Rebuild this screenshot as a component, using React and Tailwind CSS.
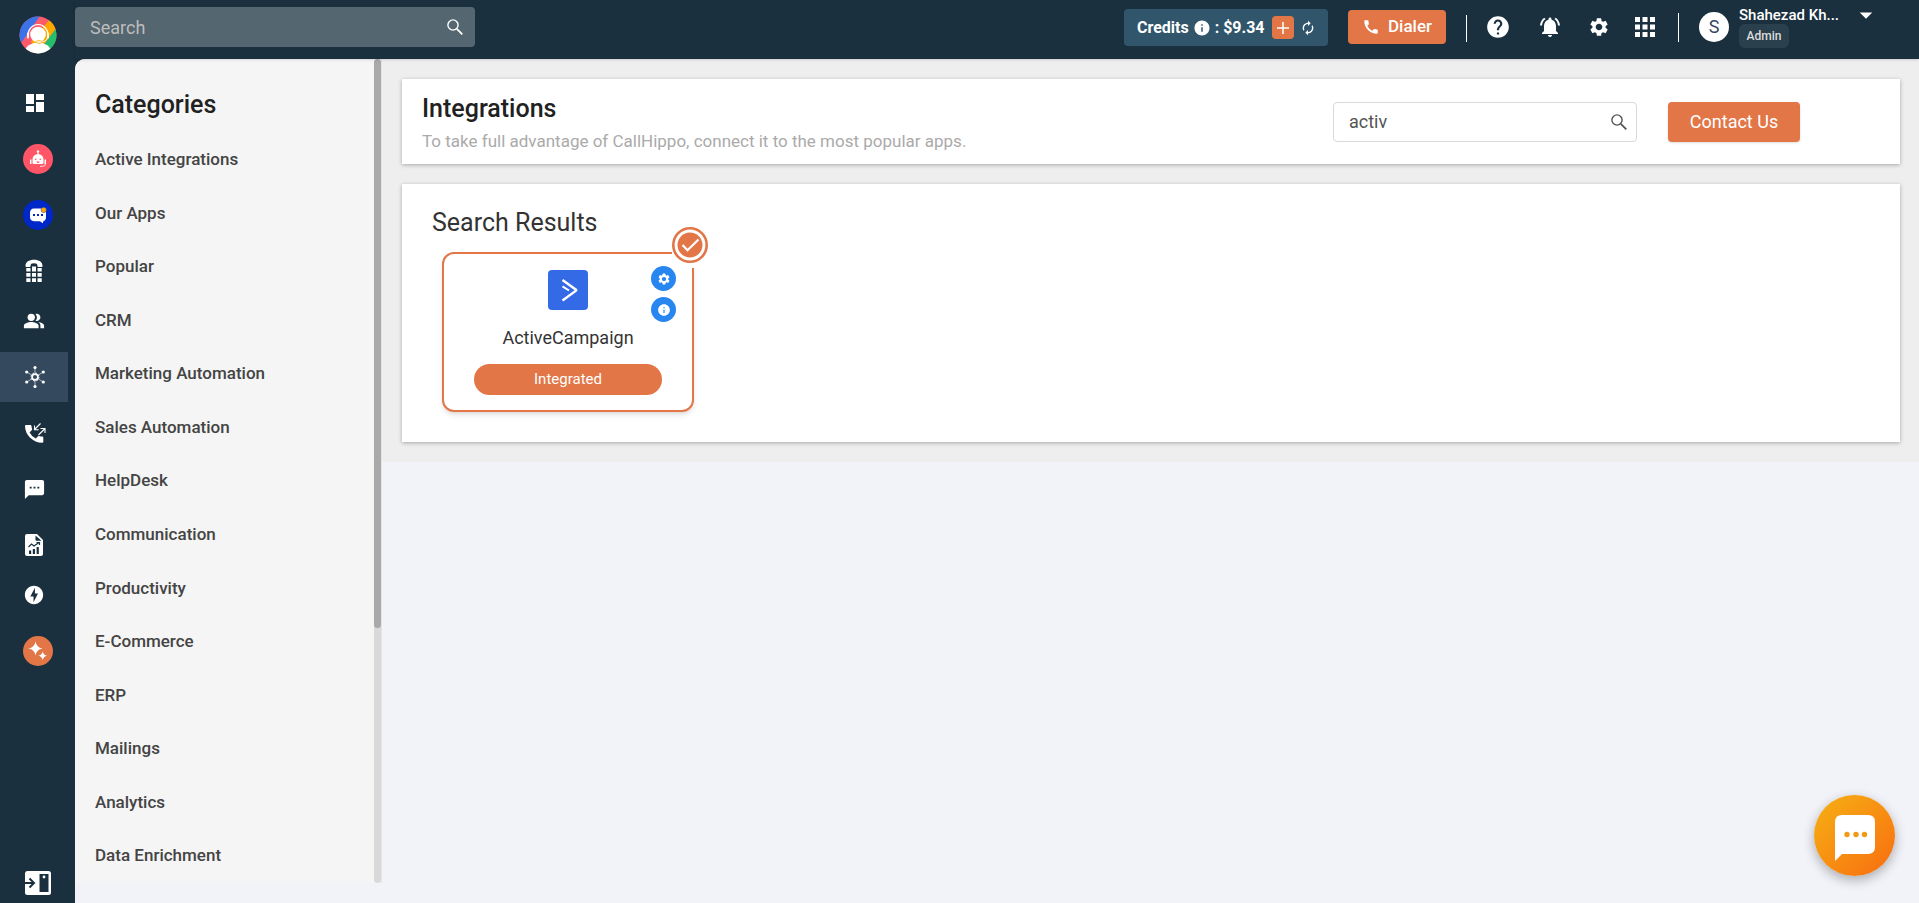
import { useState } from 'react';
import {
  MdApps,
  MdArrowDropDown,
  MdAutorenew,
  MdCall,
  MdDashboard,
  MdHelp,
  MdInfo,
  MdNotificationsActive,
  MdOfflineBolt,
  MdPeopleAlt,
  MdSettings,
  MdSms
} from 'react-icons/md';

const categories = [
  'Active Integrations',
  'Our Apps',
  'Popular',
  'CRM',
  'Marketing Automation',
  'Sales Automation',
  'HelpDesk',
  'Communication',
  'Productivity',
  'E-Commerce',
  'ERP',
  'Mailings',
  'Analytics',
  'Data Enrichment'
];

const SearchIcon = ({ className }) => (
  <svg viewBox="0 0 16 16" className={className} fill="none" stroke="currentColor">
    <circle cx="6" cy="6" r="5.1" strokeWidth="1.4" />
    <path d="M9.8 9.8 15.3 15.3" strokeWidth="1.8" />
  </svg>
);

const LogoIcon = () => (
  <svg viewBox="0 0 38 38" className="size-[38px]">
    <defs>
      <clipPath id="logo-clip"><circle cx="19" cy="19" r="18.5" /></clipPath>
    </defs>
    <g clipPath="url(#logo-clip)">
      <rect width="38" height="38" fill="#ff5a6a" />
      <path d="M0 0h21L2 27H0z" fill="#3b72e8" />
      <path d="M31 3 38 12 20 34 12 26z" fill="#ffa800" />
      <path d="M38 11v27H18z" fill="#23bf6c" />
      <path d="M9 19a10 10.5 0 0 1 20 0" fill="none" stroke="#fff" strokeWidth="1.2" />
      <path d="M9 17.500v4M29 17.500v4" stroke="#fff" strokeWidth="2" strokeLinecap="round" />
      <ellipse cx="19" cy="36" rx="13" ry="9.500" fill="#fff" />
      <circle cx="19" cy="18.500" r="7.800" fill="#fff" />
      <path d="M28.500 22c-1 3-3.500 4-7 4" fill="none" stroke="#fff" strokeWidth="1" />
      <ellipse cx="20" cy="26" rx="3.200" ry="1.300" fill="#fff" stroke="#ffa800" strokeWidth=".8" />
    </g>
  </svg>
);

const BotIcon = () => (
  <svg viewBox="0 0 30 30" className="size-[30px]">
    <circle cx="15" cy="15" r="15" fill="#ff5566" />
    <path d="M14.500 8h1v3h-1z" fill="#fff" />
    <circle cx="15" cy="7.500" r="1.200" fill="#fff" />
    <path d="M9.500 19v-3.500a5.500 5.500 0 0 1 11 0V19q0 1-1 1h-9q-1 0-1-1z" fill="#fff" />
    <path d="M7 15.500h1.500V20H7zM21.500 15.500H23V20h-1.500z" fill="#fff" />
    <path d="M22.300 20c0 2-1.500 2.300-5.300 2.400" fill="none" stroke="#fff" strokeWidth=".9" />
    <circle cx="12.800" cy="15.300" r=".8" fill="#ff5566" />
    <circle cx="17.200" cy="15.300" r=".8" fill="#ff5566" />
    <path d="M13.500 17.400h3q-.3 1.500-1.500 1.500t-1.500-1.500z" fill="#ff5566" />
  </svg>
);

const BotChatIcon = () => (
  <svg viewBox="0 0 30 30" className="size-[30px]">
    <circle cx="15" cy="15" r="15" fill="#0028c8" />
    <path d="M11 8.500h8q4 0 4 4.500v4q0 3.500-2.500 4l-.8 2.200-2.700-2H11q-4-.2-4-4.200v-4q0-4.500 4-4.500z" fill="#fff" />
    <circle cx="20.700" cy="10" r="2.700" fill="#ffa800" stroke="#0028c8" strokeWidth=".4" />
    <path d="M10 14h2v2h-2zM14 14h2v2h-2zM18 14h2v2h-2z" fill="#0028c8" />
  </svg>
);

const DialpadIcon = () => (
  <svg viewBox="0 0 24 24" className="size-6" fill="currentColor">
    <path d="M2.500 7C2.500 3 6 .8 11 .8S19.500 3 19.500 7c0 .7-.4 1-1 1h-3c-.7 0-1-.3-1-1 0-2-1-2.700-3.500-2.700S7.500 5 7.500 7c0 .7-.3 1-1 1h-3c-.6 0-1-.3-1-1z" />
    <path d="M3.300 9h4.200v3.600H3.300zM9 7.500h4v5.100H9zM14.500 9h4.200v3.600h-4.200zM3.300 14h4.200v3.700H3.300zM9 14h4v3.700H9zM14.500 14h4.200v3.700h-4.200zM3.300 19.200h4.200V23H3.300zM9 19.200h4V23H9zM14.500 19.200h4.200V23h-4.200z" />
  </svg>
);

const HubIcon = () => (
  <svg viewBox="0 0 24 24" className="size-6" fill="currentColor" stroke="currentColor">
    <path d="M12 2v6M12 16v6M4 7.200l5 3M20 7.200l-5 3M4 16.800l5-3M20 16.800l-5-3" strokeWidth=".6" />
    <circle cx="12" cy="12" r="2.900" fill="none" strokeWidth="1.700" />
    <circle cx="12" cy="12" r="4" fill="none" strokeWidth="1" strokeDasharray="1.600 1.540" />
    <g stroke="none">
      <circle cx="12" cy="2.500" r="1.600" />
      <circle cx="12" cy="21.500" r="1.600" />
      <circle cx="3.700" cy="7" r="1.600" />
      <circle cx="20.300" cy="7" r="1.600" />
      <circle cx="3.700" cy="17" r="1.600" />
      <circle cx="20.300" cy="17" r="1.600" />
    </g>
  </svg>
);

const CallLogIcon = () => (
  <svg viewBox="0 0 24 24" className="size-6" fill="currentColor">
    <path d="M3 4h4.500q.8 0 .9.800.2 1.700.7 3.200.2.600-.2 1.100l-2.300 2.300q2.200 4.200 6.200 6.100l2.200-2.300q.5-.4 1.100-.2 1.600.5 3.300.6.900.1.900.9v4.300q0 1-1 1C10 21.800 2 14 2 5q0-1 1-1z" />
    <path d="M17.500 2.500 12 8M11.500 4.500V8.700h4.200M15.500 14l6-6M17.500 7.500h4.500v4.500" fill="none" stroke="currentColor" strokeWidth="1.100" />
  </svg>
);

const ReportIcon = () => (
  <svg viewBox="0 0 24 24" className="size-6">
    <path d="M4 1h10l6 6v14q0 2-2 2H4q-2 0-2-2V3q0-2 2-2z" fill="#fff" />
    <path d="M12.500 2.500V7q0 .7.700.7h5.300z" fill="#1a303e" />
    <path d="M5.500 14l3-3 2.500 2 5-3.500M13.500 9.500h3v2.500" fill="none" stroke="#1a303e" strokeWidth="1.200" />
    <path d="M6 17.500h2.200V21H6zM9.800 16H12v5H9.800zM13.600 14h2.200v7h-2.200z" fill="#1a303e" />
  </svg>
);

const SparkleIcon = () => (
  <svg viewBox="0 0 30 30" className="size-[30px]">
    <circle cx="15" cy="15" r="15" fill="#e27647" />
    <path d="M12.500 5.500q1 6 7 7-6 1-7 7-1-6-7-7 6-1 7-7zM19.700 15.500q.7 3.500 4.300 4.200-3.600.7-4.300 4.300-.7-3.600-4.300-4.300 3.600-.7 4.300-4.200z" fill="#fff" />
  </svg>
);

const PanelIcon = () => (
  <svg viewBox="0 0 26 24" className="h-6 w-[26px]">
    <rect width="26" height="24" rx="2.500" fill="#fff" />
    <rect x="14.500" y="3" width="9" height="18" fill="#1a303e" />
    <path d="M0 12h8.500M4.500 7.500 9 12l-4.500 4.500" fill="none" stroke="#1a303e" strokeWidth="2" />
    <circle cx="19" cy="6" r="1.400" fill="#fff" />
  </svg>
);

const navGroups = [
  [
    { label: 'Dashboard', icon: <MdDashboard size={24} /> },
    { label: 'AI Voice Agent', icon: <BotIcon /> },
    { label: 'AI Chat', icon: <BotChatIcon /> },
    { label: 'Numbers', icon: <DialpadIcon /> }
  ],
  [
    { label: 'Users', icon: <MdPeopleAlt size={22} /> },
    { label: 'Integrations', icon: <HubIcon />, active: true },
    { label: 'Call Logs', icon: <CallLogIcon /> },
    { label: 'Messages', icon: <MdSms size={23} /> },
    { label: 'Reports', icon: <ReportIcon /> }
  ],
  [
    { label: 'Power Dialer', icon: <MdOfflineBolt size={22} /> },
    { label: 'AI Features', icon: <SparkleIcon /> }
  ]
];

const Sidebar = () => (
  <aside className="sticky top-0 h-screen w-[75px] shrink-0 flex flex-col bg-[#1a303e] text-white">
    <a href="#" aria-label="Home" className="self-center mt-4">
      <LogoIcon />
    </a>
    <nav className="mt-6">
      {navGroups.map((group, i) => (
        <div key={i} className="flex flex-col gap-1.5">
          {group.map(item => (
            <a
              key={item.label}
              href="#"
              aria-label={item.label}
              className={`flex items-center w-[68px] h-[50px] pl-[23px] ${item.active ? 'bg-[#34495e]' : ''}`}
            >
              {item.icon}
            </a>
          ))}
        </div>
      ))}
    </nav>
    <button type="button" aria-label="Expand menu" className="mt-auto mb-2 ml-[25px] self-start">
      <PanelIcon />
    </button>
  </aside>
);

const Header = () => (
  <header className="relative z-10 flex h-[59px] items-start bg-[#1a303e] text-white shadow">
    <label className="flex items-center w-[400px] h-10 mt-[7px] px-[15px] rounded bg-[#54666f]">
      <input
        type="text"
        aria-label="Search"
        placeholder="Search"
        className="flex-1 min-w-0 pt-0.5 bg-transparent text-lg placeholder-[#bdbdbd] focus:outline-none"
      />
      <SearchIcon className="size-4 mr-[-3px]" />
    </label>

    <div className="ml-auto flex items-start pr-[38px]">
      <div className="flex items-center w-[204px] h-[37px] mt-[9px] pl-[13px] rounded bg-[#31566c] text-base font-bold">
        <span>Credits</span>
        <MdInfo size={18} className="mx-1" />
        <span>: $9.34</span>
        <button type="button" aria-label="Add credits" className="ml-auto flex items-center justify-center w-[22px] h-[23px] rounded bg-[#e27647]">
          <svg viewBox="0 0 12 12" className="size-3" stroke="currentColor" strokeWidth="1.500">
            <path d="M6 0v12M0 6h12" />
          </svg>
        </button>
        <button type="button" aria-label="Refresh credits" className="ml-1.5 mr-3">
          <MdAutorenew size={16} />
        </button>
      </div>

      <button type="button" className="flex items-center justify-center gap-2 w-[98px] h-[34px] mt-2.5 ml-5 rounded bg-[#e27647] text-[17px] font-medium">
        <MdCall size={18} />
        Dialer
      </button>

      <div className="w-px h-[27px] mt-[15px] ml-5 bg-white" />

      <div className="flex items-center mt-3 ml-[18px]">
        <button type="button" aria-label="Help"><MdHelp size={26} /></button>
        <button type="button" aria-label="Notifications" className="ml-[27px]"><MdNotificationsActive size={24} /></button>
        <button type="button" aria-label="Settings" className="ml-[26px]"><MdSettings size={22} /></button>
        <button type="button" aria-label="Apps" className="ml-5"><MdApps size={30} /></button>
      </div>

      <div className="w-px h-[29px] mt-[13px] ml-[18px] bg-white" />

      <div className="flex items-center justify-center size-[30px] mt-3 ml-5 rounded-full bg-white text-[#34495e] text-lg">
        S
      </div>
      <div className="ml-2.5 mt-1.5 w-[110px]">
        <div className="text-[15px] leading-[18px] font-medium whitespace-nowrap">Shahezad Kh...</div>
        <div className="flex items-center justify-center w-[50px] h-6 rounded-md bg-[#2b404d] text-xs font-medium text-[#dddddd]">
          Admin
        </div>
      </div>
      <button type="button" aria-label="Account menu" className="ml-0.5">
        <MdArrowDropDown size={30} />
      </button>
    </div>
  </header>
);

const CategoryPanel = () => (
  <section className="sticky top-[59px] flex w-[307px] h-[calc(100vh-79px)] shrink-0 overflow-hidden rounded-tl-[10px] border-r border-[#e4e4e4] bg-[#f5f5f5]">
    <div className="flex-1 px-5 pt-7">
      <h2 className="text-[25px] leading-9 font-medium text-[#212121]">Categories</h2>
      <ul className="mt-2.5 grid auto-rows-fr h-[750px]">
        {categories.map(name => (
          <li key={name} className="flex items-center text-[17px] font-medium text-[#444444] whitespace-nowrap">
            <a href="#">{name}</a>
          </li>
        ))}
      </ul>
    </div>
    <div className="w-[7px] rounded bg-[#d9d9d9]">
      <div className="h-[69%] rounded bg-[#a9a9a9]" />
    </div>
  </section>
);

const IntegrationCard = () => (
  <article className="relative w-[252px] h-40 rounded-xl border-2 border-[#e27647] bg-white shadow-md flex flex-col items-center">
    <svg viewBox="0 0 40 40" className="size-10 mt-4">
      <rect width="40" height="40" rx="4" fill="#356ae6" />
      <path d="M14.500 10 28 19.700q.5.500 0 1L14.500 30.500" fill="none" stroke="#fff" strokeWidth="2.400" />
      <path d="M14.500 16.300 21 20.500" stroke="#fff" strokeWidth="2" />
    </svg>
    <h4 className="mt-4 text-lg leading-6 text-[#333333]">ActiveCampaign</h4>
    <button type="button" className="mt-3.5 w-[188px] h-[31px] rounded-full bg-[#e27647] text-[15px] text-white">
      Integrated
    </button>

    <div className="absolute right-4 top-3 flex flex-col gap-1.5">
      <button type="button" aria-label="Integration settings" className="flex items-center justify-center size-[25px] rounded-full bg-[#2886f0] text-white">
        <MdSettings size={14} />
      </button>
      <button type="button" aria-label="Integration details" className="flex items-center justify-center size-[25px] rounded-full bg-[#2886f0] text-white">
        <MdInfo size={14} />
      </button>
    </div>

    {/* white backing cuts the card border behind the tick */}
    <div className="absolute -top-[27px] -right-4 h-[41px] bg-white">
      <svg viewBox="0 0 36 36" className="size-9">
        <circle cx="18" cy="18" r="16.700" fill="#fff" stroke="#e27647" strokeWidth="2.600" />
        <circle cx="18" cy="18" r="12.500" fill="#e27647" />
        <path d="M10.500 18l5 5.200L26.500 12.500" fill="none" stroke="#fff" strokeWidth="2.300" />
      </svg>
    </div>
  </article>
);

const App = () => {
  const [query, setQuery] = useState('activ');

  return (
    <div className="flex min-h-screen bg-[#1a303e]" style={{ fontFamily: "Roboto, 'Liberation Sans', sans-serif" }}>
      <Sidebar />

      <div className="flex-1 min-w-0 flex flex-col">
        <Header />

        <div className="flex-1 flex items-start rounded-tl-[10px] bg-[#f1f3f8]">
          <CategoryPanel />

          <main className="flex-1 min-w-0 flex flex-col gap-5 py-5 pl-5 pr-[19px] bg-[#eeeeee]">
            <section className="flex items-center h-[85px] pl-5 pr-[100px] bg-white shadow-[0_1px_4px_rgba(0,0,0,0.3)]">
              <div className="pt-0.5">
                <h1 className="text-[25px] leading-9 font-medium text-[#212121]">Integrations</h1>
                <p className="text-[17px] leading-7 text-[#aaaaaa]">
                  To take full advantage of CallHippo, connect it to the most popular apps.
                </p>
              </div>
              <label className="ml-auto flex items-center w-[304px] h-10 px-[15px] rounded border border-[#d9d9d9]">
                <input
                  type="text"
                  aria-label="Search integrations"
                  value={query}
                  onChange={e => setQuery(e.target.value)}
                  className="flex-1 min-w-0 bg-transparent text-lg text-[#555555] focus:outline-none"
                />
                <SearchIcon className="size-4 mr-[-6px] text-[#555555]" />
              </label>
              <button type="button" className="ml-[31px] w-[132px] h-10 rounded bg-[#e27647] text-lg text-white shadow-sm">
                Contact Us
              </button>
            </section>

            <section className="px-[30px] pt-5 pb-[30px] bg-white shadow-[0_1px_4px_rgba(0,0,0,0.3)]">
              <h3 className="text-[25px] leading-[38px] text-[#333333]">Search Results</h3>
              <div className="flex flex-wrap gap-5 mt-2.5 pl-2.5">
                <IntegrationCard />
              </div>
            </section>
          </main>
        </div>
      </div>

      <button
        type="button"
        aria-label="Open chat"
        className="fixed right-6 bottom-[27px] flex items-center justify-center size-[81px] rounded-full bg-linear-to-br from-[#f5b014] to-[#f76b10] shadow-[0_4px_12px_rgba(0,0,0,0.3)]"
      >
        <svg viewBox="0 0 40 46" className="w-10 h-[46px] mt-1">
          <path d="M7 0h26q7 0 7 7v25q0 7-7 7H7l-7 7V7q0-7 7-7z" fill="#fff" />
          <circle cx="12" cy="19.500" r="2.700" fill="#f29a13" />
          <circle cx="21" cy="19.500" r="2.700" fill="#f29a13" />
          <circle cx="29.500" cy="19.500" r="2.700" fill="#f29a13" />
        </svg>
      </button>
    </div>
  );
};

export default App;
